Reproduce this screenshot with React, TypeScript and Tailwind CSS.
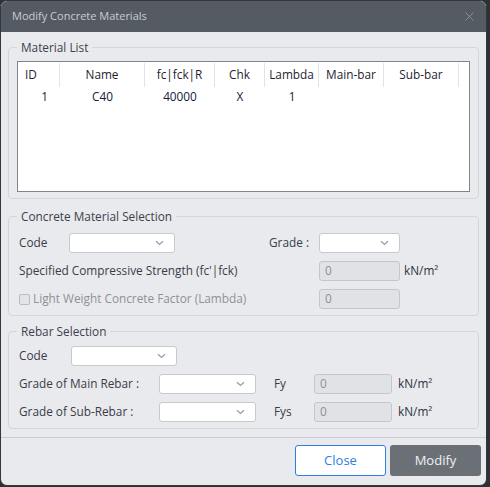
import { X } from 'lucide-react';

const font = { fontFamily: '"Open Sans", "Noto Sans", sans-serif' };

const columns = [
  { label: 'ID', w: 'w-[42px]', align: 'justify-start pl-[7px]' },
  { label: 'Name', w: 'w-[85px]', align: 'justify-center' },
  { label: 'fc|fck|R', w: 'w-[70px]', align: 'justify-center' },
  { label: 'Chk', w: 'w-[50px]', align: 'justify-center' },
  { label: 'Lambda', w: 'w-[54px]', align: 'justify-center' },
  { label: 'Main-bar', w: 'w-[65px]', align: 'justify-center' },
  { label: 'Sub-bar', w: 'w-[75px]', align: 'justify-center' },
];

const rows = [['1', 'C40', '40000', 'X', '1', '', '']];

function Chevron() {
  return (
    <svg width="9" height="6" viewBox="0 0 9 6" className="text-[#9a9fa6]">
      <path d="M1 1.2 L4.5 4.4 L8 1.2" fill="none" stroke="currentColor" strokeWidth="1.4" />
    </svg>
  );
}

function Select({ w }: { w: string }) {
  return (
    <div className={`${w} h-[20px] bg-white border border-[#c6c9ce] rounded-[3px] flex items-center justify-end pr-[10px]`}>
      <Chevron />
    </div>
  );
}

function Disabled({ w }: { w: string }) {
  return (
    <div className={`${w} h-[20px] bg-[#e0e2e5] border border-[#c3c6ca] rounded-[3px] flex items-center pl-[5px] text-[#8d9096]`}>
      0
    </div>
  );
}

function Unit() {
  return <span className="text-[#2f3140]">kN/m²</span>;
}

function Group({ title, children, className = '' }: { title: string; children: React.ReactNode; className?: string }) {
  return (
    <fieldset className={`border border-[#d3d5d9] rounded-[4px] px-[8px] ${className}`}>
      <legend className="px-[4px] text-[#3b3f4c] leading-[16px]">{title}</legend>
      {children}
    </fieldset>
  );
}

export default function App() {
  return (
    <div style={font} className="w-[490px] h-[487px] bg-[#2e3033] text-[11.8px]">
      <div className="w-[487px] h-[486px] rounded-[7px] border border-[#34373b] overflow-hidden bg-[#e9eaed] flex flex-col">
        <div className="h-[31px] bg-[#555b63] flex items-center justify-between pl-[11px] pr-[9px] shrink-0">
          <span className="text-[#c8ccd1] text-[11px]">Modify Concrete Materials</span>
          <X size={15} strokeWidth={1.1} className="text-[#a0a6ad]" />
        </div>

        <div className="flex-1 flex flex-col px-[7px] pt-[7px]">
          <Group title="Material List" className="h-[160px] pb-[5px]">
            <div className="mt-[6px] h-[131px] bg-white border border-[#80858b] pt-[1px]">
              <div className="flex h-[24px]">
                {columns.map((c) => (
                  <div key={c.label} className={`${c.w} flex items-center ${c.align} border-r border-[#e2e3e6] text-[#1e1e30]`}>
                    {c.label}
                  </div>
                ))}
              </div>
              {rows.map((r, i) => (
                <div key={i} className="flex h-[19px] items-center text-[#14213d]">
                  {r.map((v, j) => (
                    <div key={j} className={`${columns[j].w} ${j === 0 ? 'text-right pr-[12px]' : 'text-center'}`}>
                      {v}
                    </div>
                  ))}
                </div>
              ))}
            </div>
          </Group>

          <Group title="Concrete Material Selection" className="mt-[9px] h-[108px]">
            <div className="pl-[2px] pt-[9px] flex flex-col gap-[8px] text-[#3a3c48]">
              <div className="flex items-center">
                <span className="w-[50px]">Code</span>
                <Select w="w-[106px]" />
                <span className="flex-1 text-right pr-[10px]">Grade :</span>
                <Select w="w-[81px]" />
                <span className="w-[70px]" />
              </div>
              <div className="flex items-center">
                <span className="flex-1">Specified Compressive Strength (fc'|fck)</span>
                <Disabled w="w-[81px]" />
                <span className="w-[70px] pl-[4px]">
                  <Unit />
                </span>
              </div>
              <div className="flex items-center">
                <span className="flex-1 flex items-center gap-[3px] text-[#8e9197]">
                  <span className="w-[11px] h-[11px] border border-[#b9bcc1] bg-[#e3e4e7] rounded-[2px]" />
                  Light Weight Concrete Factor (Lambda)
                </span>
                <Disabled w="w-[81px]" />
                <span className="w-[70px]" />
              </div>
            </div>
          </Group>

          <Group title="Rebar Selection" className="mt-[7px] h-[106px]">
            <div className="pl-[2px] pt-[7px] flex flex-col gap-[8px] text-[#3a3c48]">
              <div className="flex items-center">
                <span className="w-[52px]">Code</span>
                <Select w="w-[106px]" />
              </div>
              <div className="flex items-center">
                <span className="w-[140px]">Grade of Main Rebar :</span>
                <Select w="w-[97px]" />
                <span className="w-[58px] pl-[18px]">Fy</span>
                <Disabled w="w-[78px]" />
                <span className="pl-[6px]">
                  <Unit />
                </span>
              </div>
              <div className="flex items-center">
                <span className="w-[140px]">Grade of Sub-Rebar :</span>
                <Select w="w-[97px]" />
                <span className="w-[58px] pl-[18px]">Fys</span>
                <Disabled w="w-[78px]" />
                <span className="pl-[6px]">
                  <Unit />
                </span>
              </div>
            </div>
          </Group>
        </div>

        <div className="h-[48px] border-t border-[#caccd0] flex items-start justify-end gap-[4px] pt-[7px] pr-[5px] shrink-0">
          <button className="w-[91px] h-[31px] bg-white border border-[#2f7de1] rounded-[3px] text-[#2f7de1] text-[13px]">
            Close
          </button>
          <button className="w-[91px] h-[31px] bg-[#6b7077] rounded-[3px] text-[#eef0f2] text-[13px]">
            Modify
          </button>
        </div>
      </div>
    </div>
  );
}
